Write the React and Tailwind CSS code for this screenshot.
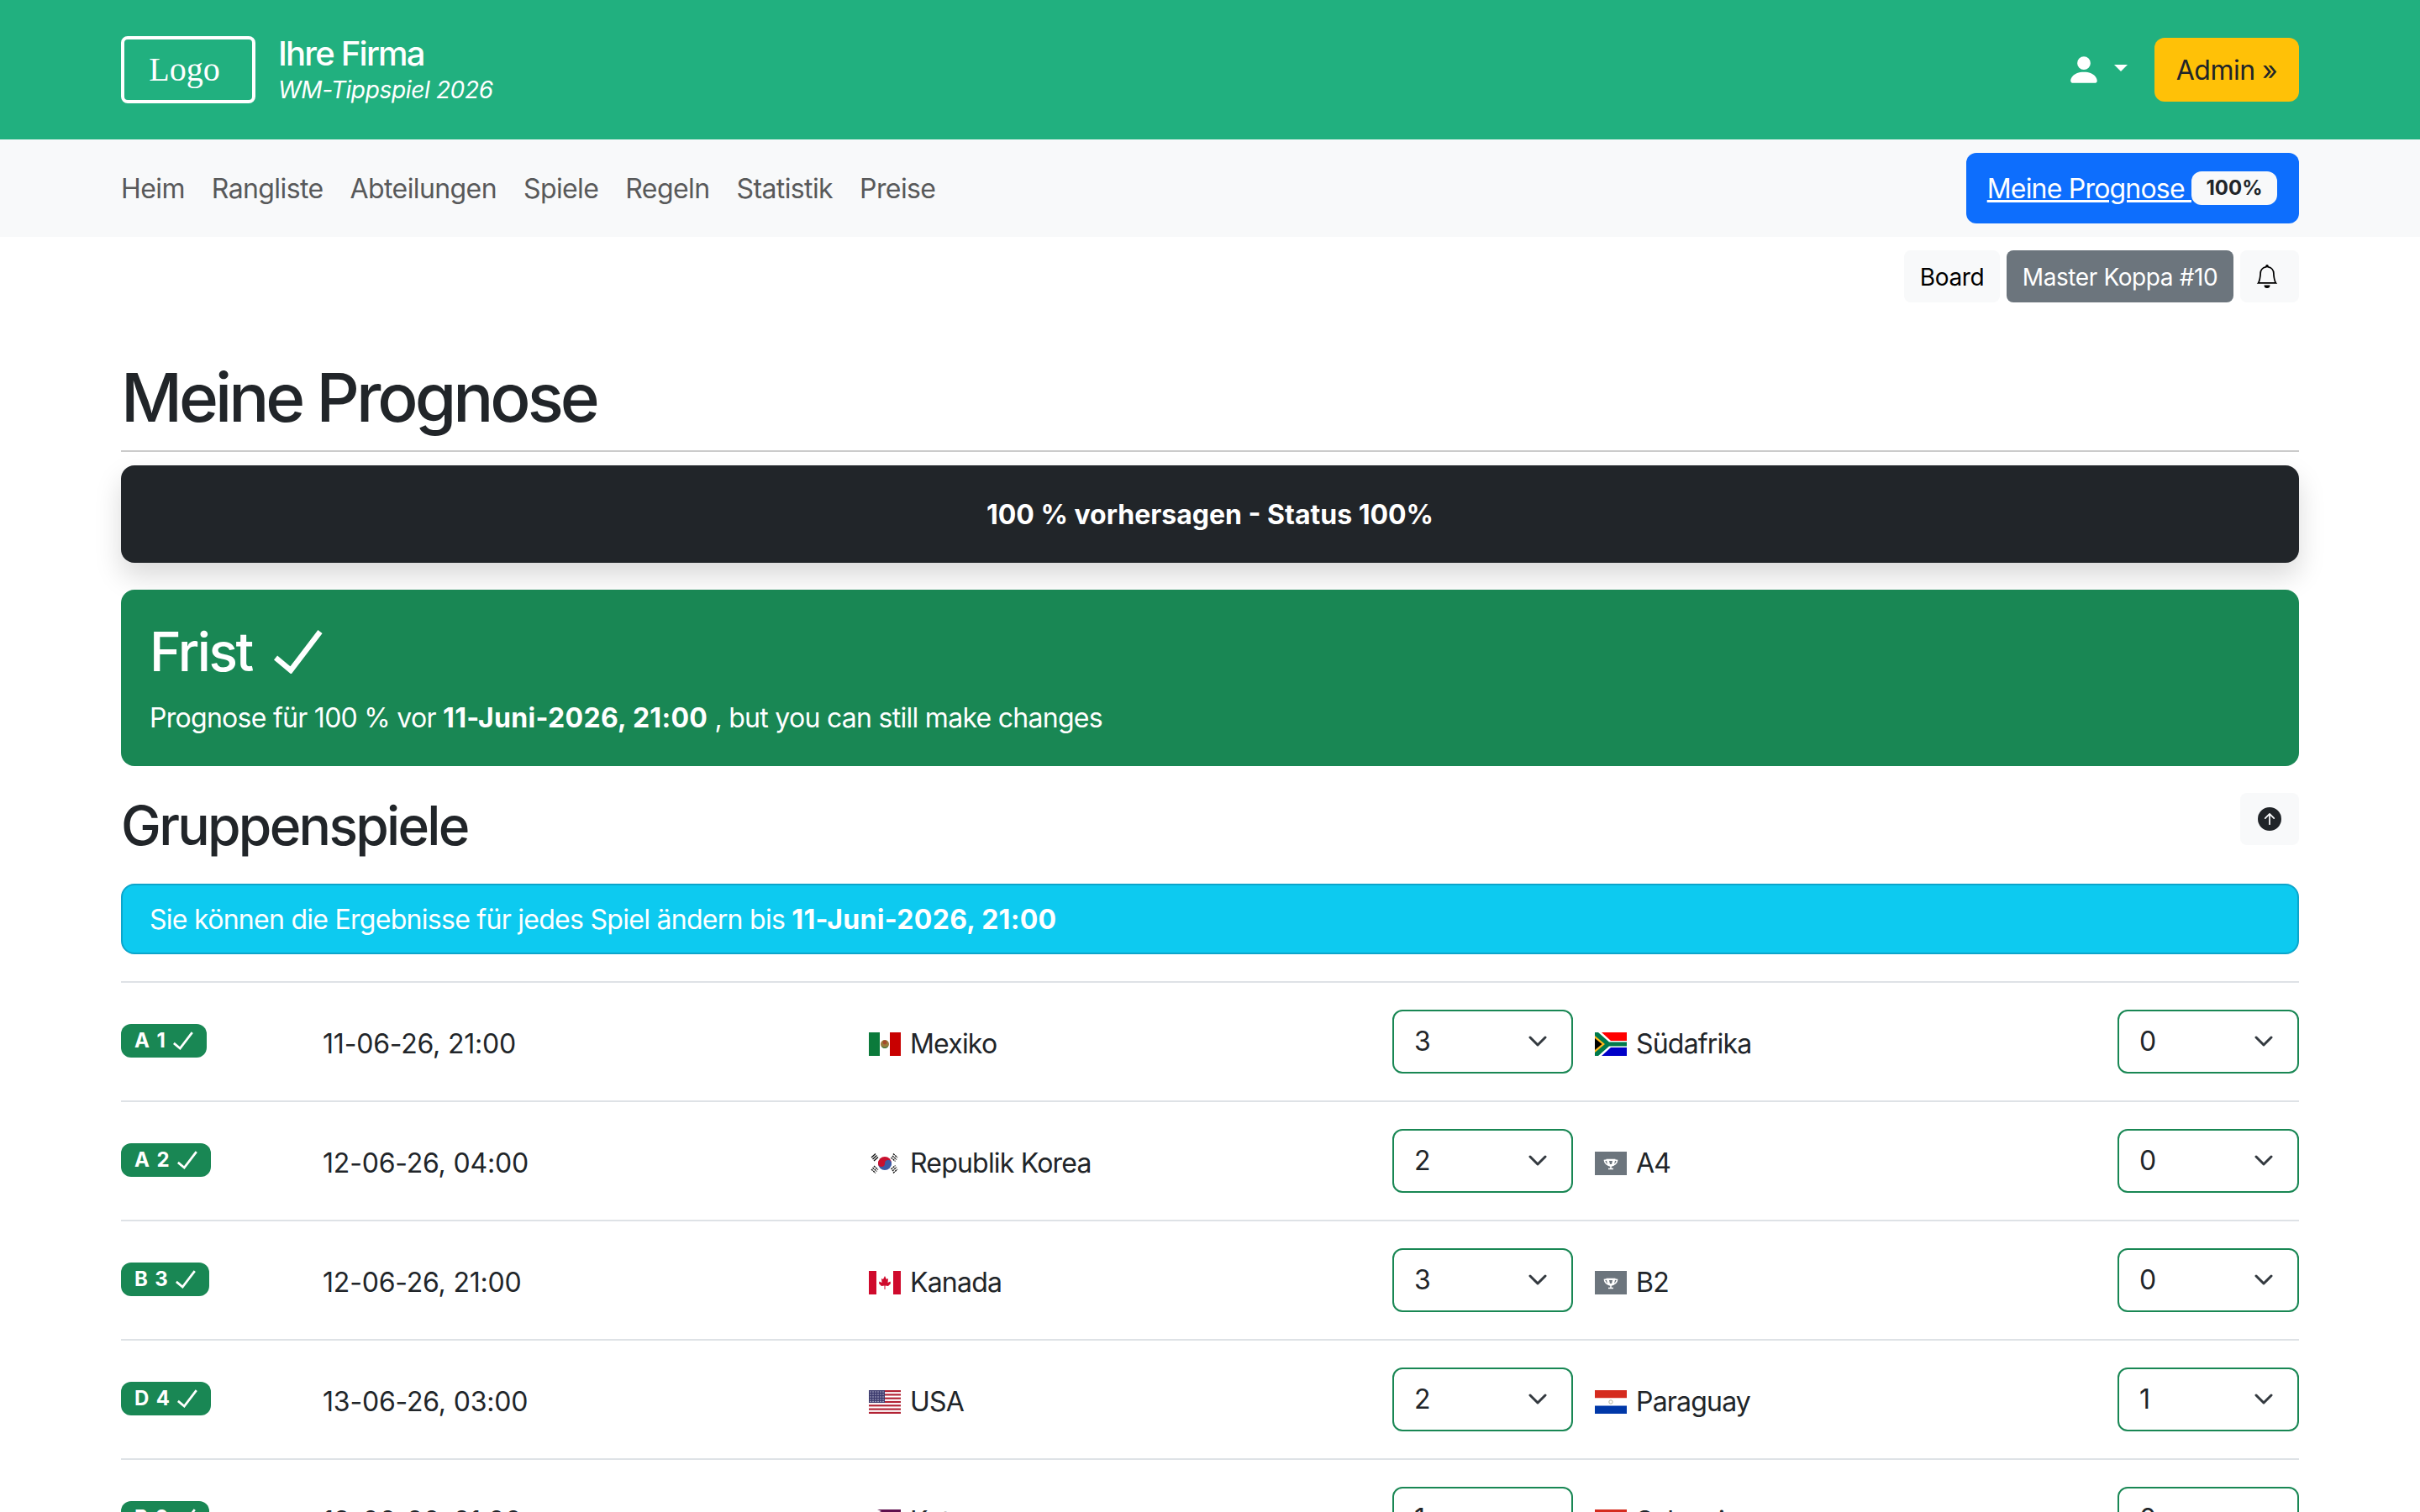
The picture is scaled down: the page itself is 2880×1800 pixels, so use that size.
import { BsBell, BsPersonFill, BsArrowUpCircleFill } from 'react-icons/bs';

const navLinks = ['Heim', 'Rangliste', 'Abteilungen', 'Spiele', 'Regeln', 'Statistik', 'Preise'];

const matches = [
  { code: 'A 1', date: '11-06-26, 21:00', home: 'Mexiko', homeFlag: 'mx', homeGoals: 3, away: 'Südafrika', awayFlag: 'za', awayGoals: 0 },
  { code: 'A 2', date: '12-06-26, 04:00', home: 'Republik Korea', homeFlag: 'kr', homeGoals: 2, away: 'A4', awayFlag: 'tbd', awayGoals: 0 },
  { code: 'B 3', date: '12-06-26, 21:00', home: 'Kanada', homeFlag: 'ca', homeGoals: 3, away: 'B2', awayFlag: 'tbd', awayGoals: 0 },
  { code: 'D 4', date: '13-06-26, 03:00', home: 'USA', homeFlag: 'us', homeGoals: 2, away: 'Paraguay', awayFlag: 'py', awayGoals: 1 },
  { code: 'B 6', date: '13-06-26, 21:00', home: 'Katar', homeFlag: 'qa', homeGoals: 1, away: 'Schweiz', awayFlag: 'ch', awayGoals: 0 },
];

function Check({ className }) {
  return (
    <svg viewBox="0 0 58 52" className={className} fill="none" stroke="currentColor" strokeWidth="6.5">
      <path d="M2 33 L20 48 L55 2" />
    </svg>
  );
}

function Flag({ code }) {
  return (
    <svg viewBox="0 0 38 28" className="w-[38px] h-[28px] shrink-0">
      {code === 'mx' && (
        <>
          <rect width="38" height="28" fill="#fff" />
          <rect width="13" height="28" fill="#0b7a3b" />
          <rect x="25" width="13" height="28" fill="#c80000" />
          <circle cx="19" cy="14" r="5" fill="#9a7a3c" />
          <path d="M15 16 Q19 20 23 16 L22 18 Q19 20 16 18 Z" fill="#2c7a3f" />
          <circle cx="19" cy="12" r="2.4" fill="#a5492a" />
        </>
      )}
      {code === 'kr' && (
        <>
          <rect width="38" height="28" fill="#fff" />
          <path d="M11 14 a8 8 0 0 1 16 0 Z" fill="#c8102e" />
          <path d="M11 14 a8 8 0 0 0 16 0 Z" fill="#3c5aa6" />
          <circle cx="15" cy="14" r="4" fill="#c8102e" />
          <circle cx="23" cy="14" r="4" fill="#3c5aa6" />
          <g stroke="#111" strokeWidth="1.4">
            <path d="M3 7 L8 2.5 M4.5 9 L9.5 4.5 M6 11 L11 6.5" />
            <path d="M29 2.5 L34 7 M28 5 L33 9.5 M26.5 7 L31.5 11.5" strokeDasharray="2.2 0.8" />
            <path d="M3 21 L8 25.5 M4.5 19 L9.5 23.5 M6 17 L11 21.5" strokeDasharray="2.2 0.8" />
            <path d="M29 25.5 L34 21 M28 23 L33 18.5 M26.5 21 L31.5 16.5" strokeDasharray="2.2 0.8" />
          </g>
        </>
      )}
      {code === 'ca' && (
        <>
          <rect width="38" height="28" fill="#fff" />
          <rect width="9" height="28" fill="#cf0a2c" />
          <rect x="29" width="9" height="28" fill="#cf0a2c" />
          <path d="M19 6 L21 10 L23 9 L22.5 14 L25.5 12.5 L26 15 L23 18 L19.5 17.5 L19.5 22 L18.5 22 L18.5 17.5 L15 18 L12 15 L12.5 12.5 L15.5 14 L15 9 L17 10 Z" fill="#cf0a2c" />
        </>
      )}
      {code === 'us' && (
        <>
          <rect width="38" height="28" fill="#fff" />
          {[0, 2, 4, 6, 8, 10, 12].map((i) => (
            <rect key={i} y={i * (28 / 13)} width="38" height={28 / 13} fill="#b22234" />
          ))}
          <rect width="19" height="15" fill="#3c3b6e" />
          <g fill="#d5d5e5">
            {[2, 5, 8, 11, 14, 17].map((x) =>
              [2, 5, 8, 11, 13.5].map((y) => <rect key={`${x}-${y}`} x={x - 0.6} y={y - 0.6} width="1.2" height="1.2" />)
            )}
          </g>
        </>
      )}
      {code === 'za' && (
        <>
          <rect width="38" height="14" fill="#ff0000" />
          <rect y="14" width="38" height="14" fill="#0000c8" />
          <path d="M0 0 H8 L19 10 H38 V18 H19 L8 28 H0 Z" fill="#fff" />
          <path d="M0 0 H4 L17 11.5 H38 V16.5 H17 L4 28 H0 Z" fill="#007a4d" />
          <path d="M0 4 L12 14 L0 24 Z" fill="#ffb81c" />
          <path d="M0 7 L8.5 14 L0 21 Z" fill="#000" />
        </>
      )}
      {code === 'py' && (
        <>
          <rect width="38" height="9.5" fill="#d52b1e" />
          <rect y="9.5" width="38" height="9" fill="#fff" />
          <rect y="18.5" width="38" height="9.5" fill="#0038a8" />
          <circle cx="19" cy="14" r="2.2" fill="none" stroke="#9a9a7a" strokeWidth="0.7" />
        </>
      )}
      {code === 'qa' && (
        <>
          <rect width="38" height="28" fill="#fff" />
          <path d="M10 0 H38 V28 H10 L15 25 L10 22 L15 19 L10 16 L15 13 L10 10 L15 7 L10 4 L15 2 Z" fill="#5f0f4e" />
        </>
      )}
      {code === 'ch' && (
        <>
          <rect width="38" height="28" fill="#d52b1e" />
          <path d="M16 6 H22 V11 H27 V17 H22 V22 H16 V17 H11 V11 H16 Z" fill="#fff" />
        </>
      )}
      {code === 'tbd' && (
        <>
          <rect width="38" height="28" fill="#6c757d" />
          <g fill="none" stroke="#fff" strokeWidth="1.6">
            <path d="M14.5 9.5 H23.5 L22 16 Q19 18 16 16 Z" fill="#fff" />
            <path d="M14.5 10 L11.5 10.5 Q12 14.5 16 16" />
            <path d="M23.5 10 L26.5 10.5 Q26 14.5 22 16" />
            <path d="M19 17 V20 M16 20.5 H22" />
          </g>
          <path d="M17 11 H21 L20 15 H18 Z" fill="#6c757d" />
        </>
      )}
    </svg>
  );
}

function ScoreSelect({ value }) {
  return (
    <div className="h-[76px] w-full border-2 border-[#198754] rounded-[12px] bg-white pl-[24px] pr-[29px] flex items-center justify-between text-[32px] text-[#212529]">
      <span>{value}</span>
      <svg viewBox="0 0 22 14" className="w-[22px] h-[14px]" fill="none" stroke="#343a40" strokeWidth="3" strokeLinecap="round" strokeLinejoin="round">
        <path d="M2 2 L11 11 L20 2" />
      </svg>
    </div>
  );
}

function MatchRow({ match }) {
  return (
    <div className="grid grid-cols-[240px_650px_623px_241px_622px_216px] items-center h-[142px] border-b-2 border-[#dee2e6] text-[32px] text-[#212529]">
      <div className="pb-[8px]">
        <span className="inline-flex items-center h-[40px] px-[16px] gap-[8px] rounded-[12px] bg-[#198754] text-white text-[24px] font-bold tracking-[1.4px]">
          {match.code}
          <Check className="w-[24px] h-[22px]" />
        </span>
      </div>
      <div className="pt-[6px] tracking-[-0.2px]">{match.date}</div>
      <div className="pt-[6px] flex items-center gap-[11px] tracking-[-0.8px]">
        <Flag code={match.homeFlag} />
        {match.home}
      </div>
      <div className="pr-[26px]">
        <ScoreSelect value={match.homeGoals} />
      </div>
      <div className="pt-[6px] flex items-center gap-[11px] tracking-[-0.8px]">
        <Flag code={match.awayFlag} />
        {match.away}
      </div>
      <div>
        <ScoreSelect value={match.awayGoals} />
      </div>
    </div>
  );
}

export default function App() {
  return (
    <div className="h-[1800px] overflow-hidden bg-white font-[Inter,sans-serif] text-[32px] text-[#212529]">
      <header className="h-[166px] bg-[#21b07f] px-[144px] flex items-center justify-between text-white">
        <div className="flex items-center gap-[27px]">
          <div className="w-[160px] h-[80px] border-[4px] border-white rounded-[8px] pr-[9px] flex items-center justify-center font-['Liberation_Serif',serif] text-[40px]">
            Logo
          </div>
          <div>
            <div className="text-[40px] leading-[48px] font-medium tracking-[-1.8px]">Ihre Firma</div>
            <div className="text-[28px] leading-[38px] italic tracking-[-0.35px]">WM-Tippspiel 2026</div>
          </div>
        </div>
        <div className="flex items-center">
          <BsPersonFill className="w-[42px] h-[42px] mr-[15px]" />
          <svg viewBox="0 0 16 8" className="w-[16px] h-[8px] mr-[32px] -mt-[4px]" fill="white">
            <path d="M0 0 H16 L8 8 Z" />
          </svg>
          <button className="h-[76px] w-[172px] pt-[2px] rounded-[12px] bg-[#ffc107] text-[#212529] text-[32px] tracking-[-0.5px]">Admin »</button>
        </div>
      </header>

      <nav className="h-[116px] bg-[#f8f9fa] px-[144px] flex items-center justify-between">
        <div className="flex gap-[32px] pt-[2px] text-[#58595a] tracking-[-0.6px]">
          {navLinks.map((link) => (
            <a key={link}>{link}</a>
          ))}
        </div>
        <button className="h-[84px] w-[396px] rounded-[12px] bg-[#0d6efd] text-white flex items-center justify-end pr-[26px]">
          <span className="underline whitespace-pre tracking-[-0.8px] pt-[2px]">Meine Prognose </span>
          <span className="h-[40px] w-[102px] rounded-[12px] bg-[#f8f9fa] text-[#212529] text-[24px] font-bold flex items-center justify-center">
            100%
          </span>
        </button>
      </nav>

      <main className="px-[144px]">
        <div className="flex justify-end gap-[8px] pt-[16px] text-[28px] tracking-[-0.4px]">
          <button className="h-[62px] w-[114px] pt-[2px] rounded-[8px] bg-[#f8f9fa] text-black">Board</button>
          <button className="h-[62px] w-[270px] pt-[2px] rounded-[8px] bg-[#6c757d] text-white">Master Koppa #10</button>
          <button className="h-[62px] w-[70px] pr-[7px] rounded-[8px] bg-[#f8f9fa] text-black flex items-center justify-center">
            <BsBell className="w-[28px] h-[28px]" />
          </button>
        </div>

        <h1 className="mt-[65px] text-[80px] leading-[96px] font-medium tracking-[-4px]">Meine Prognose</h1>
        <hr className="mt-[15px] border-t-2 border-[#cbcbcb]" />

        <div className="mt-[16px] h-[116px] pt-[2px] rounded-[16px] bg-[#212529] text-white font-bold flex items-center justify-center shadow-[0_16px_32px_rgba(0,0,0,0.15)]">
          100 % vorhersagen - Status 100%
        </div>

        <div className="mt-[32px] h-[210px] rounded-[16px] bg-[#198754] text-white px-[34px] pt-[36px]">
          <div className="flex items-center gap-[26px] text-[64px] leading-[76px] font-medium tracking-[-2.4px]">
            Frist
            <Check className="w-[58px] h-[52px]" />
          </div>
          <p className="mt-[17px] leading-[48px] tracking-[-0.72px]">
            Prognose für 100 % vor <b className="font-bold tracking-[0.3px]">11-Juni-2026, 21:00</b> , but you can still make changes
          </p>
        </div>

        <div className="mt-[32px] h-[108px] flex items-start justify-between">
          <h2 className="text-[64px] leading-[77px] font-medium tracking-[-2.7px]">Gruppenspiele</h2>
          <button className="h-[62px] w-[70px] rounded-[8px] bg-[#f8f9fa] flex items-center justify-center">
            <BsArrowUpCircleFill className="w-[28px] h-[28px] text-[#212529]" />
          </button>
        </div>

        <div className="h-[84px] pt-[2px] rounded-[16px] bg-[#0dcaf0] border-2 border-[#0ca5cb] text-white px-[32px] flex items-center">
          <span className="tracking-[-0.72px]">
            Sie können die Ergebnisse für jedes Spiel ändern bis <b className="font-bold tracking-[0.3px]">11-Juni-2026, 21:00</b>
          </span>
        </div>

        <div className="mt-[32px] border-t-2 border-[#dee2e6]">
          {matches.map((match) => (
            <MatchRow key={match.code} match={match} />
          ))}
        </div>
      </main>
    </div>
  );
}
